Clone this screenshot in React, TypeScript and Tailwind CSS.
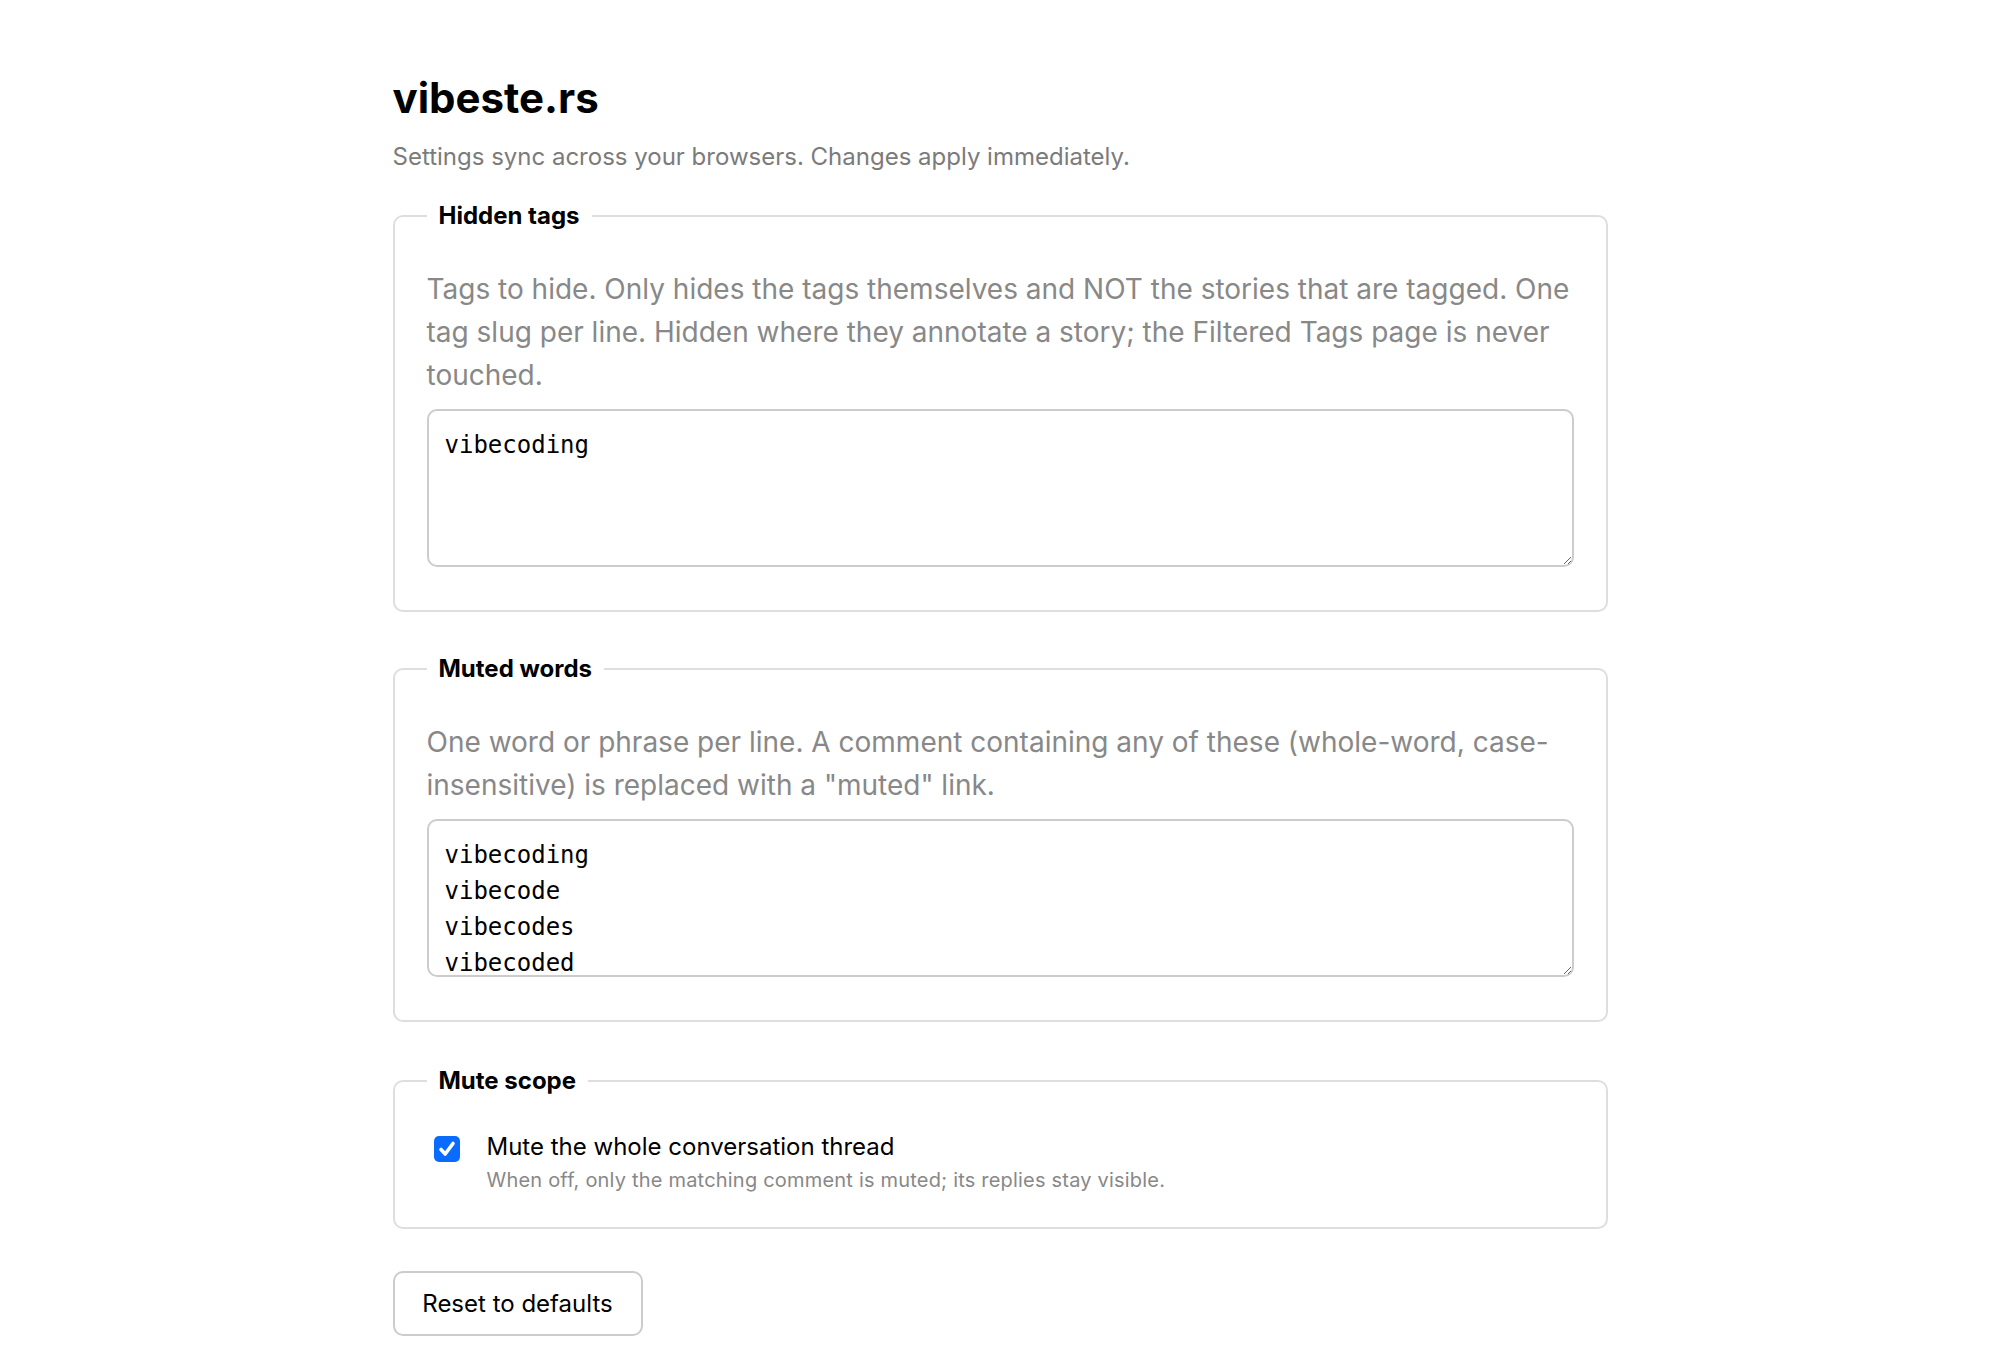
import React from "react";

function Check() {
  return (
    <div className="mt-[5px] ml-[7px] flex h-[26px] w-[26px] shrink-0 items-center justify-center rounded-[5px] bg-[#0a6cfe]">
      <svg width="22" height="22" viewBox="0 0 22 22" fill="none">
        <path d="M5 11.5 L9.2 16 L17 5.5" stroke="white" strokeWidth="3.6" strokeLinecap="round" strokeLinejoin="round" />
      </svg>
    </div>
  );
}

export default function App() {
  return (
    <div className="min-h-screen bg-white font-['Inter','Liberation_Sans',sans-serif] text-[#111]">
      <div className="mx-auto w-[1215px] pt-[74px] pb-[36px]">
        <h1 className="text-[42px] leading-[48px] font-bold text-black">vibeste.rs</h1>
        <p className="mt-[19px] text-[24px] leading-[32px] text-[#7b7b7b]">
          Settings sync across your browsers. Changes apply immediately.
        </p>

        <fieldset className="mt-[27px] rounded-[10px] border-2 border-[#dedede] px-[32px] pt-[36px] pb-[43px]">
          <legend className="px-3 text-[24px] leading-[32px] font-bold text-black">Hidden tags</legend>
          <p className="text-[28px] leading-[43px] text-[#888]">
            Tags to hide. Only hides the tags themselves and NOT the stories that are tagged. One tag slug per line. Hidden where they annotate a story; the Filtered Tags page is never touched.
          </p>
          <textarea
            className="mt-[12px] block h-[158px] w-full overflow-hidden rounded-[10px] border-2 border-[#cccccc] bg-white px-[16px] py-[16px] font-['DejaVu_Sans_Mono',monospace] text-[24px] leading-[36px] text-black outline-none"
            defaultValue={"vibecoding"}
            spellCheck={false}
          />
        </fieldset>

        <fieldset className="mt-[41px] rounded-[10px] border-2 border-[#dedede] px-[32px] pt-[36px] pb-[43px]">
          <legend className="px-3 text-[24px] leading-[32px] font-bold text-black">Muted words</legend>
          <p className="text-[28px] leading-[43px] text-[#888]">
            One word or phrase per line. A comment containing any of these (whole-word, case-insensitive) is replaced with a "muted" link.
          </p>
          <textarea
            className="mt-[12px] block h-[158px] w-full overflow-hidden rounded-[10px] border-2 border-[#cccccc] bg-white px-[16px] py-[16px] font-['DejaVu_Sans_Mono',monospace] text-[24px] leading-[36px] text-black outline-none"
            defaultValue={"vibecoding\nvibecode\nvibecodes\nvibecoded\nvibecoder\nvibecoders"}
            spellCheck={false}
          />
        </fieldset>

        <fieldset className="mt-[43px] rounded-[10px] border-2 border-[#dedede] px-[32px] pt-[34px] pb-[33px]">
          <legend className="px-3 text-[24px] leading-[32px] font-bold text-black">Mute scope</legend>
          <div className="flex items-start gap-[27px]">
            <Check />
            <div>
              <div className="text-[24px] leading-[32px] text-black">Mute the whole conversation thread</div>
              <div className="mt-[4px] text-[20px] leading-[27px] tracking-[0.2px] text-[#888]">
                When off, only the matching comment is muted; its replies stay visible.
              </div>
            </div>
          </div>
        </fieldset>

        <button className="mt-[42px] flex h-[65px] w-[250px] items-center justify-center rounded-[10px] border-2 border-[#cccccc] bg-white text-[24px] leading-[32px] text-black">
          Reset to defaults
        </button>
      </div>
    </div>
  );
}
